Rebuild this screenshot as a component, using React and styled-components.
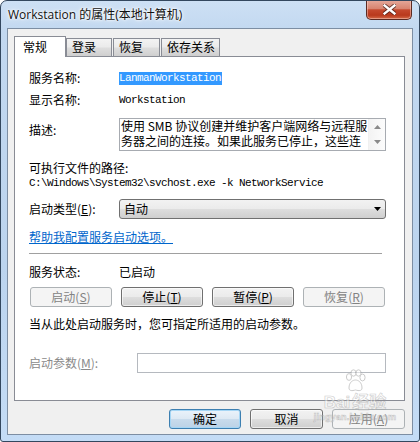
import React from 'react';
import styled, { createGlobalStyle } from 'styled-components';

const ui = `"Noto Sans CJK SC", "Liberation Sans", sans-serif`;
const mono = `"Liberation Mono", "Noto Sans CJK SC", monospace`;

const GlobalStyle = createGlobalStyle`
  html, body {
    margin: 0;
    padding: 0;
    background: #ffffff;
  }
  * {
    box-sizing: border-box;
  }
`;

const Window = styled.div`
  position: relative;
  width: 420px;
  height: 442px;
  border: 1px solid #33475e;
  border-radius: 7px 7px 3px 3px;
  background: linear-gradient(to bottom, #cde0f4 0%, #c2d8f0 30px, #bcd4ee 60%, #c4dcf6 100%);
  padding: 0 6px 6px 6px;
  display: flex;
  flex-direction: column;
  overflow: hidden;
  font-family: ${ui};
  font-size: 12px;
  color: #000;
`;

const TitleBar = styled.div`
  height: 27px;
  display: flex;
  justify-content: space-between;
  align-items: flex-start;
`;

const Title = styled.div`
  padding: 6px 0 0 1px;
  font-family: "Open Sans", "Noto Sans CJK SC", sans-serif;
  font-size: 12px;
  line-height: 16px;
  color: #111;
  text-shadow: 0 0 6px #ffffff, 0 0 3px #ffffff, 0 0 2px #ffffff;
`;

const CloseButton = styled.div`
  width: 46px;
  height: 20px;
  margin: -1px 1px 0 0;
  border: 1px solid #5b2a22;
  border-top: none;
  border-radius: 0 0 5px 5px;
  background: linear-gradient(to bottom, #e6aa9c 0%, #d88470 45%, #c5492e 52%, #b9391d 80%, #d46a48 100%);
  box-shadow: inset 0 0 0 1px rgba(255, 220, 210, 0.45);
  display: flex;
  align-items: center;
  justify-content: center;
`;

const Client = styled.div`
  flex: 1;
  border: 1px solid #7d8ea3;
  background: #f0f0f0;
  padding: 7px 7px 5px 6px;
  display: flex;
  flex-direction: column;
`;

const TabRow = styled.div`
  display: flex;
  align-items: flex-end;
  height: 20px;
`;

const Tab = styled.div`
  position: relative;
  z-index: ${p => (p.$active ? 2 : 1)};
  width: ${p => p.$w}px;
  height: ${p => (p.$active ? 21 : 18)}px;
  margin-bottom: ${p => (p.$active ? -1 : 0)}px;
  padding-left: ${p => (p.$active ? 8 : 5)}px;
  padding-top: ${p => (p.$active ? 3 : 1)}px;
  margin-left: ${p => p.$ml || 0}px;
  border: 1px solid #898c95;
  border-bottom: none;
  background: ${p => (p.$active ? '#ffffff' : 'linear-gradient(to bottom, #f3f3f3 0%, #ebebeb 45%, #dddddd 55%, #cfcfcf 100%)')};
  font-size: 12px;
  line-height: 14px;
  white-space: nowrap;
`;

const Panel = styled.div`
  flex: 1;
  border: 1px solid #898c95;
  background: #ffffff;
  padding: 14px 18px 0 14px;
  display: flex;
  flex-direction: column;
`;

const Row = styled.div`
  display: flex;
  align-items: ${p => p.$align || 'center'};
  margin-top: ${p => p.$mt || 0}px;
`;

const Label = styled.div`
  width: ${p => p.$w || 90}px;
  flex-shrink: 0;
  line-height: 14px;
  margin-top: ${p => p.$mt || 0}px;
  color: ${p => (p.$disabled ? '#8a8a8a' : '#000')};
  white-space: nowrap;
`;

const Text = styled.div`
  line-height: 14px;
  white-space: nowrap;
`;

const Mono = styled.div`
  font-family: ${mono};
  font-size: 11px;
  letter-spacing: -0.6px;
  line-height: 14px;
  white-space: nowrap;
`;

const Selected = styled.span`
  display: inline-block;
  background: #3399ff;
  color: #ffffff;
  line-height: 13px;
  padding: 0 1px 0 0;
`;

const TextArea = styled.div`
  position: relative;
  width: 267px;
  height: 33px;
  border: 1px solid #a7abb1;
  background: #fff;
  display: flex;
  overflow: hidden;
`;

const AreaText = styled.div`
  flex: 1;
  padding: 0 0 0 1px;
  margin-top: -1px;
  line-height: 15px;
  white-space: nowrap;
  overflow: hidden;
`;

const ScrollBar = styled.div`
  width: 17px;
  background: linear-gradient(to right, #f3f3f3, #fcfcfc);
  border-left: 1px solid #f0f0f0;
  display: flex;
  flex-direction: column;
  justify-content: space-between;
  align-items: center;
  padding: 6px 0 6px;
`;

const Combo = styled.div`
  width: 267px;
  height: 20px;
  border: 1px solid #707070;
  border-radius: 3px;
  background: linear-gradient(to bottom, #f2f2f2 0%, #ebebeb 48%, #dddddd 52%, #cfcfcf 100%);
  display: flex;
  align-items: center;
  justify-content: space-between;
  padding: 0 4px 0 4px;
`;

const Link = styled.a`
  color: #0066cc;
  text-decoration: underline;
  line-height: 14px;
  cursor: pointer;
`;

const Separator = styled.div`
  margin-top: 9px;
  width: 353px;
  height: 1px;
  background: #a0a0a0;
`;

const ButtonGrid = styled.div`
  display: grid;
  grid-template-columns: repeat(4, 82px);
  column-gap: 9px;
  margin: 8px 0 0 1px;
`;

const Button = styled.div`
  width: ${p => p.$w || 82}px;
  height: 20px;
  border: 1px solid ${p => (p.$disabled ? '#adb2b5' : p.$default ? '#3c7fb1' : '#707070')};
  border-radius: 3px;
  background: ${p =>
    p.$disabled
      ? '#f4f4f4'
      : p.$default
      ? 'linear-gradient(to bottom, #eaf3fb 0%, #dde9f4 48%, #c8dbec 52%, #bcd2e6 100%)'
      : 'linear-gradient(to bottom, #f2f2f2 0%, #ebebeb 48%, #dddddd 52%, #cfcfcf 100%)'};
  box-shadow: ${p => (p.$default ? 'inset 0 0 0 1px #a5d6f5' : p.$disabled ? 'none' : 'inset 0 0 0 1px rgba(255,255,255,0.6)')};
  color: ${p => (p.$disabled ? '#838383' : '#000')};
  display: flex;
  align-items: center;
  justify-content: center;
  line-height: 14px;
  white-space: nowrap;
`;

const Input = styled.div`
  width: 249px;
  height: 20px;
  border: 1px solid #b5b9bf;
  background: #fff;
`;

const Footer = styled.div`
  margin-top: 8px;
  display: flex;
  justify-content: flex-end;
  gap: 9px;
`;

const Watermark = styled.div`
  position: absolute;
  left: 302px;
  top: 368px;
  width: 104px;
  pointer-events: none;
  opacity: 0.5;
  display: flex;
  flex-direction: column;
  align-items: center;
`;

const MarkLine = styled.div`
  display: flex;
  align-items: baseline;
  gap: 2px;
  font-family: "Liberation Sans", "Noto Sans CJK SC", sans-serif;
  font-weight: bold;
  font-size: ${p => p.$size}px;
  line-height: ${p => p.$size + 2}px;
  color: #ffffff;
  -webkit-text-stroke: 0.6px #9a9a9a;
  letter-spacing: ${p => p.$ls || 0}px;
`;

const Arrow = ({ up, color = '#5f5f5f', w = 7 }) => (
  <svg width={w} height="4" viewBox={`0 0 ${w} 4`}>
    <polygon points={up ? `0,4 ${w},4 ${w / 2},0` : `0,0 ${w},0 ${w / 2},4`} fill={color} />
  </svg>
);

const Paw = () => (
  <svg width="24" height="24" viewBox="0 0 24 24">
    <g fill="#ffffff" stroke="#9a9a9a" strokeWidth="1">
      <ellipse cx="6" cy="8" rx="2.6" ry="3.4" />
      <ellipse cx="10.5" cy="4" rx="2.6" ry="3.2" />
      <ellipse cx="15.5" cy="4" rx="2.6" ry="3.2" />
      <ellipse cx="19.5" cy="8.5" rx="2.6" ry="3.4" />
      <path d="M6 19 C6 13 10 11 12.5 11 C15 11 19 13 19 19 C19 22 16 22 12.5 21 C9 22 6 22 6 19 Z" />
    </g>
  </svg>
);

const CloseX = () => (
  <svg width="13" height="11" viewBox="0 0 13 11">
    <path
      d="M1.5 1.5 L11.5 9.5 M11.5 1.5 L1.5 9.5"
      stroke="#3d1a14"
      strokeWidth="4.2"
      strokeLinecap="square"
      opacity="0.7"
    />
    <path d="M1.5 1.5 L11.5 9.5 M11.5 1.5 L1.5 9.5" stroke="#ffffff" strokeWidth="2.4" strokeLinecap="square" />
  </svg>
);

const tabs = [
  { name: '常规', w: 52, active: true },
  { name: '登录', w: 46 },
  { name: '恢复', w: 47, ml: 1 },
  { name: '依存关系', w: 59, ml: 1 },
];

const actions = [
  { text: '启动', key: 'S', disabled: true },
  { text: '停止', key: 'T' },
  { text: '暂停', key: 'P' },
  { text: '恢复', key: 'R', disabled: true },
];

const App = () => {
  return (
    <>
      <GlobalStyle />
      <Window>
        <TitleBar>
          <Title>Workstation 的属性(本地计算机)</Title>
          <CloseButton>
            <CloseX />
          </CloseButton>
        </TitleBar>
        <Client>
          <TabRow>
            {tabs.map(t => (
              <Tab key={t.name} $w={t.w} $active={t.active} $ml={t.ml}>
                {t.name}
              </Tab>
            ))}
          </TabRow>
          <Panel>
            <Row>
              <Label>服务名称:</Label>
              <Mono>
                <Selected>LanmanWorkstation</Selected>
              </Mono>
            </Row>
            <Row $mt={8}>
              <Label>显示名称:</Label>
              <Mono>Workstation</Mono>
            </Row>
            <Row $mt={11} $align="flex-start">
              <Label $mt={5}>描述:</Label>
              <TextArea>
                <AreaText>
                  使用 SMB 协议创建并维护客户端网络与远程服
                  <br />
                  务器之间的连接。如果此服务已停止，这些连
                </AreaText>
                <ScrollBar>
                  <Arrow up color="#8a8a8a" />
                  <Arrow color="#8a8a8a" />
                </ScrollBar>
              </TextArea>
            </Row>
            <Row $mt={10}>
              <Text>可执行文件的路径:</Text>
            </Row>
            <Row $mt={1}>
              <Mono>C:\Windows\System32\svchost.exe -k NetworkService</Mono>
            </Row>
            <Row $mt={9}>
              <Label>
                启动类型(<u>E</u>):
              </Label>
              <Combo>
                <Text>自动</Text>
                <Arrow color="#000" />
              </Combo>
            </Row>
            <Row $mt={11}>
              <Link>帮助我配置服务启动选项。</Link>
            </Row>
            <Separator />
            <Row $mt={11}>
              <Label>服务状态:</Label>
              <Text>已启动</Text>
            </Row>
            <ButtonGrid>
              {actions.map(a => (
                <Button key={a.key} $disabled={a.disabled}>
                  {a.text}(<u>{a.key}</u>)
                </Button>
              ))}
            </ButtonGrid>
            <Row $mt={10}>
              <Text>当从此处启动服务时，您可指定所适用的启动参数。</Text>
            </Row>
            <Row $mt={22}>
              <Label $w={108} $disabled>
                启动参数(<u>M</u>):
              </Label>
              <Input />
            </Row>
          </Panel>
          <Footer>
            <Button $w={72} $default>确定</Button>
            <Button $w={73}>取消</Button>
            <Button $w={73} $disabled>
              应用(<u>A</u>)
            </Button>
          </Footer>
        </Client>
        <Watermark>
          <Paw />
          <MarkLine $size={17}>
            <span>Bai</span>
            <span>经验</span>
          </MarkLine>
          <MarkLine $size={9} $ls={0.2}>
            jingyan.baidu.com
          </MarkLine>
        </Watermark>
      </Window>
    </>
  );
};

export default App;
